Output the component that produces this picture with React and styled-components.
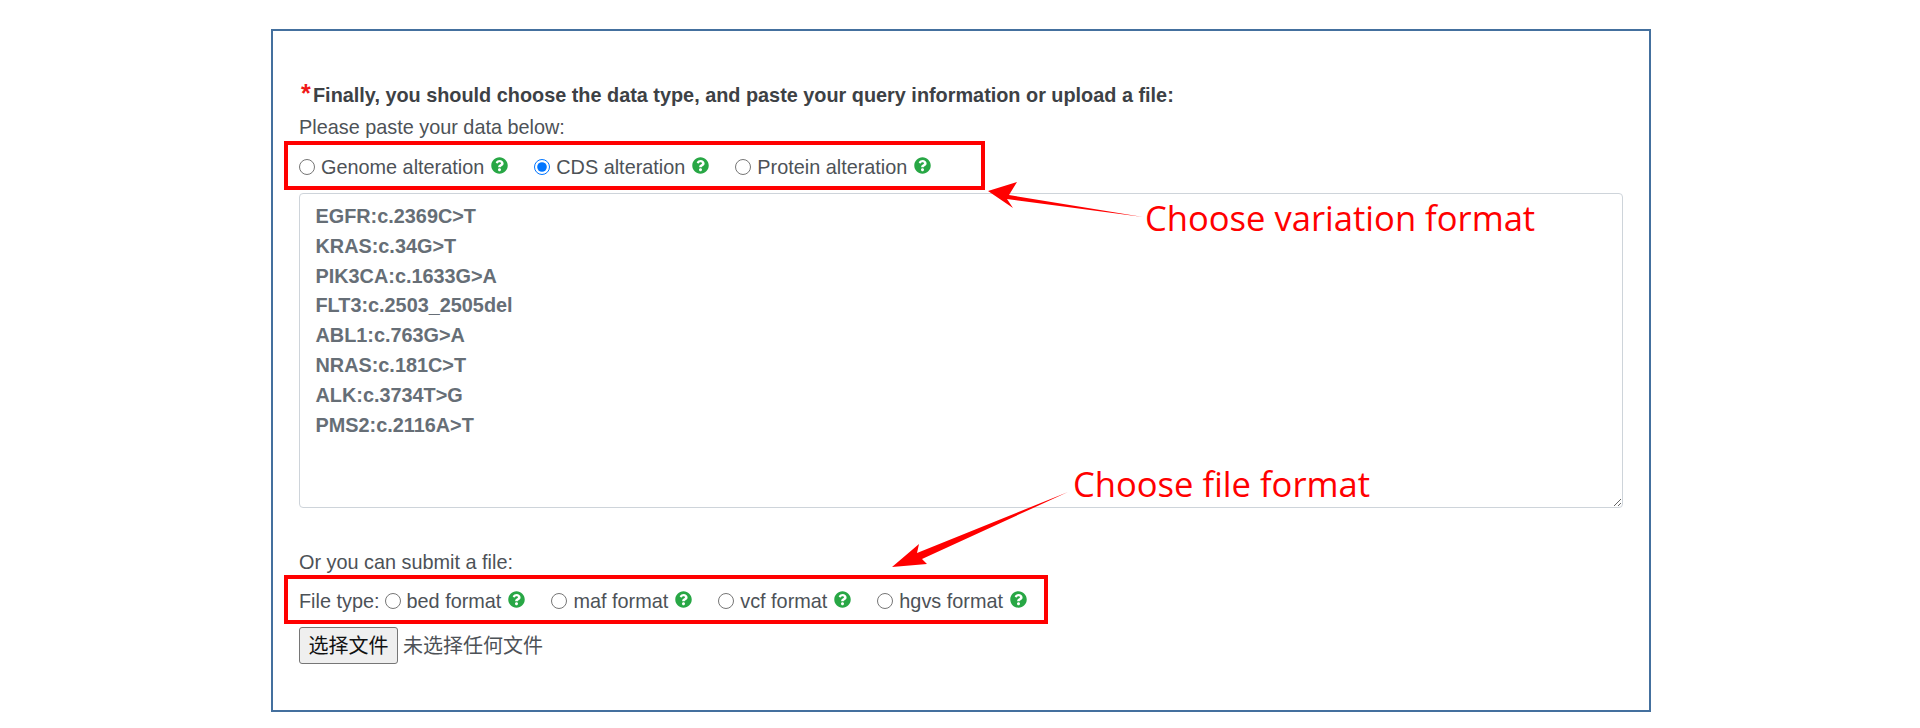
import React from 'react'
import styled, { createGlobalStyle } from 'styled-components'
import { FaQuestionCircle } from 'react-icons/fa'

const GlobalStyle = createGlobalStyle`
  html, body {
    margin: 0;
    background: #fff;
    font-family: "Liberation Sans", Arial, sans-serif;
  }
`

const Page = styled.div`
  position: relative;
  height: 728px;
  overflow: hidden;
  padding: 29px 269px 0 271px;
  box-sizing: border-box;
`

const Panel = styled.div`
  box-sizing: border-box;
  height: 683px;
  border: 2px solid #44709e;
  padding: 48px 26px 0;
  color: #4d5257;
  font-size: 19.85px;
`

const Heading = styled.div`
  display: flex;
  align-items: baseline;
  height: 28px;
  font-weight: bold;
  color: #3d4145;
  white-space: nowrap;
`

const Star = styled.span`
  color: #f01818;
  font-size: 25px;
  font-weight: bold;
  width: 14px;
  padding-left: 2px;
  box-sizing: border-box;
`

const Caption = styled.div`
  height: ${p => p.$h}px;
  line-height: ${p => p.$h}px;
  margin-top: ${p => p.$top || 0}px;
`

const RedBox = styled.div`
  display: inline-flex;
  align-items: center;
  box-sizing: border-box;
  height: 49px;
  margin-left: -15px;
  border: 4px solid #ff0000;
  padding: 3px ${p => p.$right}px 0 11px;
  white-space: nowrap;
`

const Option = styled.label`
  display: inline-flex;
  align-items: center;
  margin-right: 26px;
  &:last-child {
    margin-right: 0;
  }
`

const Radio = styled.input.attrs({ type: 'radio' })`
  width: 16px;
  height: 16px;
  margin: 0 6px 0 0;
  flex: none;
`

const FileLabel = styled.span`
  margin-right: 5px;
`

const HelpIcon = styled(FaQuestionCircle)`
  width: 17px;
  height: 17px;
  margin: -4px 0 0 7px;
  color: #28a745;
  flex: none;
`

const QueryBox = styled.textarea`
  display: block;
  box-sizing: border-box;
  width: 1324px;
  height: 315px;
  margin: 3px 0 0;
  padding: 8px 15.5px;
  border: 1.5px solid #ced4da;
  border-radius: 4px;
  outline: none;
  color: #666e76;
  font: bold 19.85px/29.8px "Liberation Sans", Arial, sans-serif;
`

const FileRow = styled.div`
  display: flex;
  align-items: center;
  margin-top: 3px;
`

const ChooseButton = styled.button`
  box-sizing: border-box;
  width: 99px;
  height: 37px;
  margin-right: 5px;
  padding: 0 0 3px;
  border: 1.5px solid #767676;
  border-radius: 3px;
  background: #efefef;
  color: #111;
  font: 20px "Noto Sans CJK SC", sans-serif;
`

const NoFile = styled.span`
  margin-top: -3px;
  font: 20px "Noto Sans CJK SC", sans-serif;
`

const Note = styled.div`
  position: absolute;
  left: ${p => p.$x}px;
  top: ${p => p.$y}px;
  color: #ff0000;
  font-family: "Open Sans", sans-serif;
  font-size: 34.6px;
  line-height: 40px;
  white-space: nowrap;
`

const Arrows = styled.svg`
  position: absolute;
  left: 0;
  top: 0;
  pointer-events: none;
`

const RadioOption = ({ label, checked }) => (
  <Option>
    <Radio name={label.includes('format') ? 'file' : 'kind'} defaultChecked={checked} />
    {label}
    <HelpIcon />
  </Option>
)

const sample = [
  'EGFR:c.2369C>T',
  'KRAS:c.34G>T',
  'PIK3CA:c.1633G>A',
  'FLT3:c.2503_2505del',
  'ABL1:c.763G>A',
  'NRAS:c.181C>T',
  'ALK:c.3734T>G',
  'PMS2:c.2116A>T',
].join('\n')

export default function App() {
  return (
    <Page>
      <GlobalStyle />
      <Panel>
        <Heading>
          <Star>*</Star>
          Finally, you should choose the data type, and paste your query information or upload a file:
        </Heading>
        <Caption $h={28} $top={6}>Please paste your data below:</Caption>
        <RedBox $right={50}>
          <RadioOption label="Genome alteration" />
          <RadioOption label="CDS alteration" checked />
          <RadioOption label="Protein alteration" />
        </RedBox>
        <QueryBox defaultValue={sample} spellCheck={false} />
        <Caption $h={26} $top={41}>Or you can submit a file:</Caption>
        <RedBox $right={17}>
          <FileLabel>File type:</FileLabel>
          <RadioOption label="bed format" />
          <RadioOption label="maf format" />
          <RadioOption label="vcf format" />
          <RadioOption label="hgvs format" />
        </RedBox>
        <FileRow>
          <ChooseButton>选择文件</ChooseButton>
          <NoFile>未选择任何文件</NoFile>
        </FileRow>
      </Panel>
      <Note $x={1145} $y={198}>Choose variation format</Note>
      <Note $x={1073} $y={464}>Choose file format</Note>
      <Arrows width="1920" height="728" viewBox="0 0 1920 728">
        <path d="M988 191 L1017 182 L1009 195 L1143 217 L1007 199 L1013 208 Z" fill="#ff0000" />
        <path d="M892 567 L919 544 L917 553 L1068 492 L922 559 L927 564 Z" fill="#ff0000" />
      </Arrows>
    </Page>
  )
}
